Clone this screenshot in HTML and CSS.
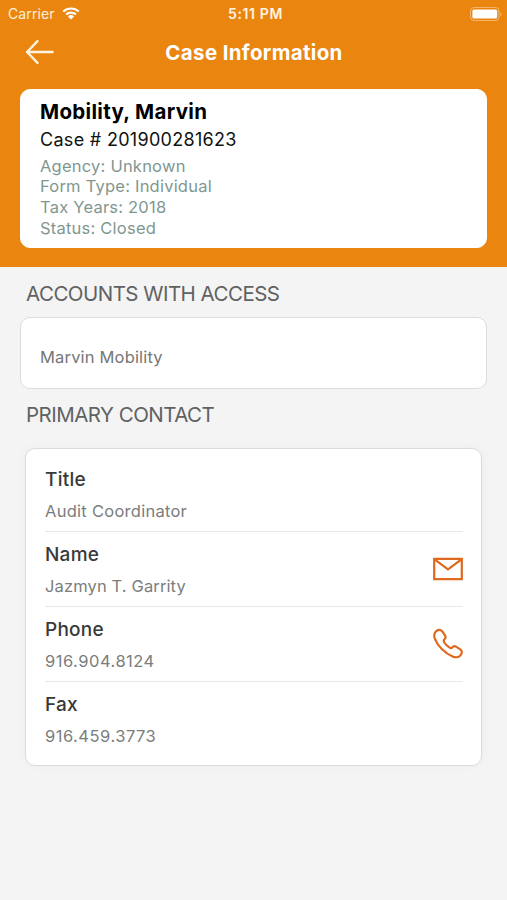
FILE: index.html
```html
<!DOCTYPE html>
<html lang="en">
<head>
  <meta charset="UTF-8">
  <meta name="viewport" content="width=device-width, initial-scale=1.0">
  <title>Case Information</title>
  <link rel="stylesheet" href="styles.css">
</head>
<body>
  <div class="top">
    <div class="status-bar">
      <div class="carrier">
        <span>Carrier</span>
        <svg class="wifi" width="18" height="13" viewBox="0 0 18 13">
          <path d="M1.2 4.6a11.2 11.2 0 0 1 15.6 0M4 7.6a7.2 7.2 0 0 1 10 0" fill="none" stroke="#fff" stroke-width="2.1"/>
          <path d="M9 12.4L5.9 9.4a4.4 4.4 0 0 1 6.2 0z" fill="#fff"/>
        </svg>
      </div>
      <span class="time">5:11 PM</span>
      <svg class="battery" width="33" height="14" viewBox="0 0 33 14">
        <rect x="0.5" y="0.5" width="28.5" height="13" rx="3.5" fill="none" stroke="#f3b46c"/>
        <rect x="2.4" y="2.4" width="24.8" height="9.2" rx="1.6" fill="#fff"/>
        <path d="M30.5 5v4.4c1.6-.8 1.6-3.6 0-4.4z" fill="#f3b46c"/>
      </svg>
    </div>
    <div class="nav">
      <a href="#" class="back">
        <svg width="30" height="26" viewBox="0 0 30 26">
          <path d="M27.6 13H2M12.5 2.2L2 13l10.5 10.8" fill="none" stroke="#fff3e2" stroke-width="2.4" stroke-linecap="round" stroke-linejoin="round"/>
        </svg>
      </a>
      <h1>Case Information</h1>
    </div>
    <div class="card case">
      <h2>Mobility, Marvin</h2>
      <p class="case-number">Case # 201900281623</p>
      <p>Agency: Unknown</p>
      <p>Form Type: Individual</p>
      <p>Tax Years: 2018</p>
      <p>Status: Closed</p>
    </div>
  </div>

  <h3 class="section-title">ACCOUNTS WITH ACCESS</h3>
  <div class="card account">
    <p>Marvin Mobility</p>
  </div>

  <h3 class="section-title primary">PRIMARY CONTACT</h3>
  <div class="card contact">
    <div class="row">
      <div>
        <h4>Title</h4>
        <p class="role">Audit Coordinator</p>
      </div>
    </div>
    <div class="row">
      <div>
        <h4>Name</h4>
        <p class="person">Jazmyn T. Garrity</p>
      </div>
      <a href="#" class="icon">
        <svg width="30" height="24" viewBox="0 0 30 24">
          <path d="M1.2 1.9h27.6v20.2H1.2zM1.6 2.3L15 12.3 28.4 2.3" fill="none" stroke="#dd6a1f" stroke-width="2.2"/>
        </svg>
      </a>
    </div>
    <div class="row">
      <div>
        <h4>Phone</h4>
        <p class="number">916.904.8124</p>
      </div>
      <a href="#" class="icon">
        <svg width="30" height="32" viewBox="0 0 30 32">
          <path d="M2.8 3.6C4.8 1.5 7.6 1.3 9.1 3.2l2.9 4.2c1 1.6.7 2.8-.5 3.900-1 1-1 1.700-.3 2.900 1.300 2.200 3.200 4 5.400 5.400 1.200.8 2 .7 2.900-.3 1.200-1.200 2.400-1.500 3.900-.5l4.200 2.900c1.800 1.300 1.500 4-.5 6-1.900 1.800-4.600 1.900-7.400.9C12.200 25.400 4.800 18.200 1.900 10.800 .9 8.200 1 5.600 2.800 3.600z" fill="none" stroke="#dd6a1f" stroke-width="2.2" stroke-linejoin="round"/>
        </svg>
      </a>
    </div>
    <div class="row">
      <div>
        <h4>Fax</h4>
        <p class="number">916.459.3773</p>
      </div>
    </div>
  </div>
</body>
</html>
```
FILE: styles.css
```css
* {
  box-sizing: border-box;
}
body {
  margin: 0;
  min-height: 900px;
  background: #f4f4f4;
  font-family: Inter, "Liberation Sans", sans-serif;
}
h1, h2, h3, h4, p {
  margin: 0;
  white-space: nowrap;
}
svg {
  display: block;
}

.top {
  height: 267px;
  padding: 0 20px;
  background: #ea860f;
}

/* status bar */
.status-bar {
  display: grid;
  grid-template-columns: 1fr auto 1fr;
  align-items: center;
  height: 27px;
  margin: 0 -20px;
  padding: 0 6px 0 8px;
  color: #fff;
  font-size: 14px;
}
.carrier {
  display: flex;
  align-items: center;
  gap: 7px;
  color: #fff0dc;
  letter-spacing: 0.1px;
}
.time {
  padding-left: 2px;
  color: #fff3e2;
  font-weight: 600;
  letter-spacing: 0.6px;
}
.battery {
  justify-self: end;
  margin-right: -2px;
}

.nav {
  display: grid;
  grid-template-columns: 35px 1fr 35px;
  align-items: center;
  height: 50px;
  margin-bottom: 12px;
}
.nav .back {
  padding-left: 5px;
}
.nav h1 {
  padding: 1px 0 0 1px;
  color: #fff;
  font-size: 20.5px;
  font-weight: 700;
  letter-spacing: 0.34px;
  text-align: center;
}

.card {
  background: #fff;
  border: 1px solid #dcdcdc;
  border-radius: 10px;
}

.case {
  height: 159px;
  padding: 9px 20px 0 19px;
  border-color: #fff;
  color: #7f9790;
  font-size: 16.5px;
  letter-spacing: 0.22px;
  line-height: 20.8px;
}
.case h2 {
  color: #000;
  font-size: 20.5px;
  font-weight: 700;
  letter-spacing: 0.32px;
  line-height: 26px;
}
.case .case-number {
  margin-bottom: 0.6px;
  color: #111;
  font-size: 18px;
  letter-spacing: 0.3px;
  line-height: 30px;
}

.section-title {
  padding: 11px 26px 8px;
  color: #606262;
  font-size: 20.5px;
  font-weight: 400;
  letter-spacing: -0.52px;
  line-height: 31px;
}
.account {
  height: 72px;
  margin: 0 20px;
  padding: 29px 19px 0;
  color: #757777;
  font-size: 16.5px;
  letter-spacing: 0.17px;
  line-height: 21px;
}
.primary {
  padding-top: 10px;
  padding-bottom: 18px;
}

.contact {
  margin: 0 25px;
  padding: 8px 18px 8px 19px;
  box-shadow: 0 0 8px rgba(0, 0, 0, 0.04);
}
.contact .row {
  display: flex;
  justify-content: space-between;
  align-items: center;
  height: 75px;
  border-bottom: 1px solid #e8e8e8;
}
.contact .row > div {
  padding-top: 4px;
}
.contact .row:last-child {
  border-bottom: 0;
}
.contact h4 {
  color: #38393a;
  font-size: 19px;
  font-weight: 500;
  letter-spacing: 0.25px;
  line-height: 30px;
}
.contact p {
  color: #7b7d7d;
  font-size: 16.5px;
  line-height: 33px;
}
.contact .role {
  letter-spacing: 0.27px;
}
.contact .person {
  letter-spacing: 0.13px;
}
.contact .number {
  letter-spacing: 0.5px;
}
```
